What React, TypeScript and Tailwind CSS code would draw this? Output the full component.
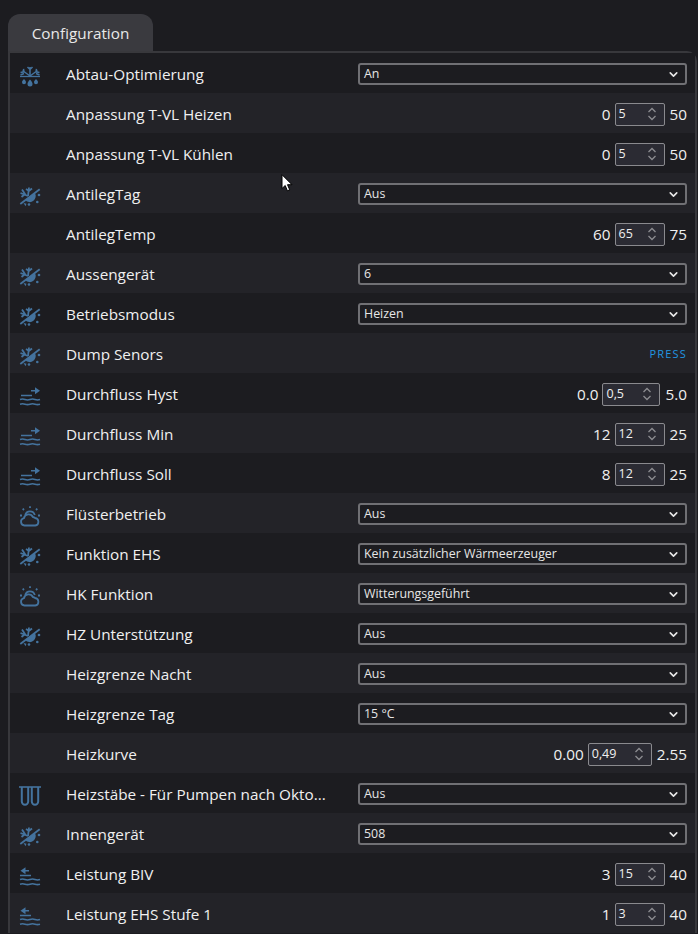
import { ChevronDown } from "lucide-react";

type IconName = "melt" | "sunsnow" | "flowOut" | "flowIn" | "cloud" | "coil";

type Row =
  | { name: string; icon?: IconName; kind: "select"; value: string }
  | { name: string; icon?: IconName; kind: "number"; min: string; value: string; max: string; width?: string }
  | { name: string; icon?: IconName; kind: "press" };

const rows: Row[] = [
  { name: "Abtau-Optimierung", icon: "melt", kind: "select", value: "An" },
  { name: "Anpassung T-VL Heizen", kind: "number", min: "0", value: "5", max: "50" },
  { name: "Anpassung T-VL Kühlen", kind: "number", min: "0", value: "5", max: "50" },
  { name: "AntilegTag", icon: "sunsnow", kind: "select", value: "Aus" },
  { name: "AntilegTemp", kind: "number", min: "60", value: "65", max: "75" },
  { name: "Aussengerät", icon: "sunsnow", kind: "select", value: "6" },
  { name: "Betriebsmodus", icon: "sunsnow", kind: "select", value: "Heizen" },
  { name: "Dump Senors", icon: "sunsnow", kind: "press" },
  { name: "Durchfluss Hyst", icon: "flowOut", kind: "number", min: "0.0", value: "0,5", max: "5.0", width: "w-[58px]" },
  { name: "Durchfluss Min", icon: "flowOut", kind: "number", min: "12", value: "12", max: "25" },
  { name: "Durchfluss Soll", icon: "flowOut", kind: "number", min: "8", value: "12", max: "25" },
  { name: "Flüsterbetrieb", icon: "cloud", kind: "select", value: "Aus" },
  { name: "Funktion EHS", icon: "sunsnow", kind: "select", value: "Kein zusätzlicher Wärmeerzeuger" },
  { name: "HK Funktion", icon: "cloud", kind: "select", value: "Witterungsgeführt" },
  { name: "HZ Unterstützung", icon: "sunsnow", kind: "select", value: "Aus" },
  { name: "Heizgrenze Nacht", kind: "select", value: "Aus" },
  { name: "Heizgrenze Tag", kind: "select", value: "15 °C" },
  { name: "Heizkurve", kind: "number", min: "0.00", value: "0,49", max: "2.55", width: "w-[64px]" },
  { name: "Heizstäbe - Für Pumpen nach Okto...", icon: "coil", kind: "select", value: "Aus" },
  { name: "Innengerät", icon: "sunsnow", kind: "select", value: "508" },
  { name: "Leistung BIV", icon: "flowIn", kind: "number", min: "3", value: "15", max: "40" },
  { name: "Leistung EHS Stufe 1", icon: "flowIn", kind: "number", min: "1", value: "3", max: "40" },
];

const Waves = () => (
  <g fill="none" stroke="currentColor" strokeWidth="1.600">
    <path d="M0 13.500c1.700-.6 3.300-.6 5 0s3.300.6 5 0 3.300-.6 5 0 3.300.6 5 0" />
    <path d="M0 18.200c1.700-.6 3.300-.6 5 0s3.300.6 5 0 3.300-.6 5 0 3.300.6 5 0" />
  </g>
);

const RowIcon = ({ name }: { name: IconName }) => {
  if (name === "melt") {
    return (
      <svg viewBox="0 0 20 20" className="w-5 h-5 overflow-visible text-[#44739e]">
        <g fill="none" stroke="currentColor" strokeWidth="1.500">
          <path d="M0 10.500h20" strokeWidth="1.300" />
          <path d="M10 10V1M7.500 1 10 3.500 12.500 1" />
          <path d="M10 10 2.500 4.500M0.500 6.500l3.500-.7-.5-3" />
          <path d="M10 10l7.500-5.500M19.500 6.500 16 5.800l.5-3" />
          <path d="M0.500 9 4 7.500M19.500 9 16 7.500" />
        </g>
        <g fill="currentColor">
          <path d="M10 13.500c1.700 2 2.500 3.200 2.500 4.500a2.500 2.500 0 0 1-5 0c0-1.300.8-2.500 2.500-4.500z" />
          <path d="M4 13c1.300 1.500 2 2.300 2 3.300a2 2 0 0 1-4 0c0-1 .7-1.800 2-3.300z" />
          <path d="M16 13c1.300 1.500 2 2.300 2 3.300a2 2 0 0 1-4 0c0-1 .7-1.800 2-3.300z" />
        </g>
      </svg>
    );
  }
  if (name === "sunsnow") {
    return (
      <svg viewBox="0 0 20 20" className="w-5 h-5 overflow-visible text-[#44739e]">
        <g fill="none" stroke="currentColor" strokeWidth="1.800">
          <path d="M0.300 18 19.700 3.200" />
          <path d="M8 10 9 1.500M6 3l3 2 3-2.500" />
          <path d="M8 10 0.500 7M2 3.500 5 8l-3.500 3" />
        </g>
        <g fill="currentColor">
          <path d="M5.300 14.200 14.700 6.800A6 6 0 0 1 5.300 14.200z" />
          <circle cx="19" cy="9" r="1.300" />
          <circle cx="17.300" cy="16" r="1.300" />
          <circle cx="9" cy="18.500" r="1.300" />
          <path d="M3.500 17l3 .8-1 2.500z" />
        </g>
      </svg>
    );
  }
  if (name === "flowOut") {
    return (
      <svg viewBox="0 0 20 20" className="w-5 h-5 overflow-visible text-[#44739e]">
        <Waves />
        <path d="M1 9.500h11M11 4.700h6" fill="none" stroke="currentColor" strokeWidth="1.500" />
        <path d="M15 1.200 20 4.700 15 8.200z" fill="currentColor" />
      </svg>
    );
  }
  if (name === "flowIn") {
    return (
      <svg viewBox="0 0 20 20" className="w-5 h-5 overflow-visible text-[#44739e]">
        <Waves />
        <path d="M0 9.500h11M3 4.700h6" fill="none" stroke="currentColor" strokeWidth="1.500" />
        <path d="M5.500 1.200 0.500 4.700 5.500 8.200z" fill="currentColor" />
      </svg>
    );
  }
  if (name === "cloud") {
    return (
      <svg viewBox="0 0 20 20" className="w-5 h-5 overflow-visible text-[#44739e]">
        <g fill="none" stroke="currentColor" strokeWidth="1.800">
          <path d="M4.500 19.500a3.700 3.700 0 0 1-.6-7.300 4.800 4.800 0 0 1 9-1.200 4.500 4.500 0 0 1 2.200 1 3.800 3.800 0 0 1 .2 7.500z" />
          <path d="M5.200 9a5 5 0 0 1 9.600 0" />
          <path d="M10 .2v1.800M2.700 2.700l1.300 1.300M17.300 2.700l-1.300 1.300M0 9.500H2M18 9.500h2" />
        </g>
      </svg>
    );
  }
  return (
    <svg viewBox="0 0 20 20" className="w-5 h-5 overflow-visible text-[#44739e]">
      <g fill="none" stroke="currentColor" strokeWidth="2">
        <path d="M-1 1h22" strokeWidth="1.600" />
        <path d="M1.800 1V15.500a3.200 3.200 0 0 0 6.400 0V1" />
        <path d="M11.800 1V15.500a3.200 3.200 0 0 0 6.400 0V1" />
      </g>
    </svg>
  );
};

const SelectBox = ({ value }: { value: string }) => (
  <div className="w-[329px] h-[22px] flex items-center justify-between pl-[4px] pr-[5px] rounded-[3px] border-2 border-[#707074] bg-[#1c1c20] text-[12.400px] text-[#e6e6e6]">
    <span>{value}</span>
    <ChevronDown className="w-[13px] h-[13px] text-[#e6e6e6]" strokeWidth={3} />
  </div>
);

const Spinner = () => (
  <svg viewBox="0 0 10 14" className="w-[10px] h-[14px] text-[#8c8c90]">
    <path d="M1.500 5 5 1.500 8.500 5M1.500 9 5 12.500 8.500 9" fill="none" stroke="currentColor" strokeWidth="1.300" />
  </svg>
);

const NumberBox = ({ min, value, max, width = "w-[50px]" }: { min: string; value: string; max: string; width?: string }) => (
  <div className="flex items-center text-[15.300px] text-[#f0f0f0]">
    <span>{min}</span>
    <div
      className={`h-[23px] ml-[4px] mr-[5px] flex items-center justify-between pl-[3px] pr-[7px] border border-[#8a8a8e] rounded-[2px] bg-[#2b2b33] text-[12.500px] ${width}`}
    >
      <span>{value}</span>
      <Spinner />
    </div>
    <span>{max}</span>
  </div>
);

export default function App() {
  return (
    <div className="relative w-[698px] h-[934px] overflow-hidden bg-[#1c1c20] font-['Open_Sans',sans-serif] text-[#f0f0f0]">
      <div className="pt-[14px] pl-[8px] pr-[1px]">
        <div className="w-[145px] h-[37px] pt-[2px] flex items-center justify-center rounded-t-[12px] bg-[#3a3a3f] text-[15.300px] text-[#e8e8e8]">
          Configuration
        </div>
        <div className="border-l-2 border-r-2 border-t-2 border-[#38383c] rounded-tr-[10px]">
          {rows.map((row, i) => (
            <div
              key={row.name}
              className={`h-[40px] pt-[2px] flex items-center pl-[10px] pr-[8px] ${i % 2 === 1 ? "bg-[#232328]" : "bg-[#1c1c20]"}`}
            >
              <div className="w-5 h-5 mt-[4px] shrink-0">{row.icon && <RowIcon name={row.icon} />}</div>
              <span className="ml-[26px] flex-1 text-[15.300px] whitespace-nowrap">{row.name}</span>
              {row.kind === "select" && <SelectBox value={row.value} />}
              {row.kind === "number" && <NumberBox min={row.min} value={row.value} max={row.max} width={row.width} />}
              {row.kind === "press" && (
                <span className="text-[11px] tracking-[1.200px] text-[#2196e0]">PRESS</span>
              )}
            </div>
          ))}
        </div>
      </div>
      {/* mouse pointer caught in the screenshot */}
      <svg viewBox="0 0 12 18" className="absolute left-[281px] top-[174px] w-[12px] h-[18px]">
        <path d="M1 .7V14.500l3.200-3 2.200 5.300 2.300-1-2.200-5.100h4.500z" fill="#fff" stroke="#000" strokeWidth="1" />
      </svg>
    </div>
  );
}
